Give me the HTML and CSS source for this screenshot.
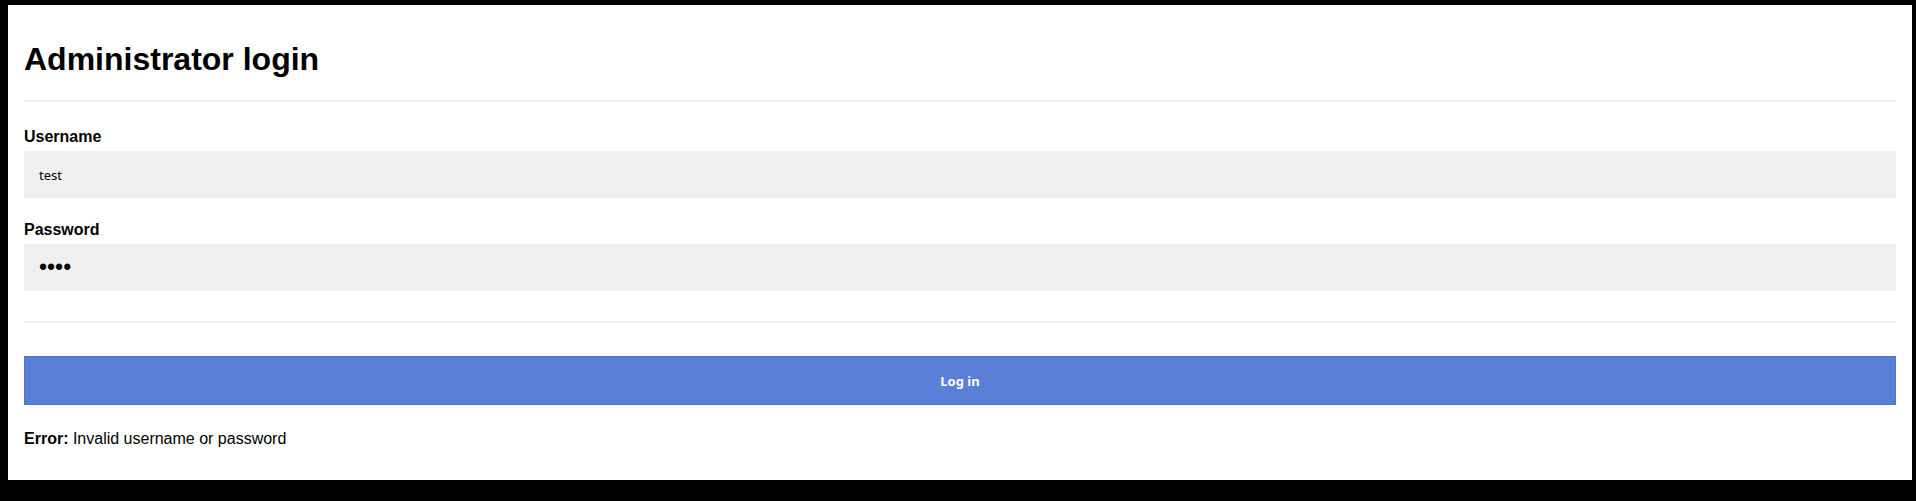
FILE: index.html
```html
<!DOCTYPE html>
<html lang="en">
<head>
<meta charset="utf-8">
<title>Administrator login</title>
<link rel="stylesheet" href="styles.css">
</head>
<body>
<main class="page">
  <h1 class="title">Administrator login</h1>
  <hr class="rule">
  <form class="login-form">
    <label class="field-label" for="username">Username</label>
    <input class="field-input" id="username" type="text" value="test">
    <label class="field-label field-label--second" for="password">Password</label>
    <input class="field-input field-input--password" id="password" type="password" value="test">
    <hr class="rule rule--form">
    <button class="submit" type="button">Log in</button>
  </form>
  <p class="error"><strong>Error:</strong> Invalid username or password</p>
</main>
</body>
</html>
```

FILE: styles.css
```css
html {
  background: #000;
}
body {
  margin: 5px 4px 0 8px;
  padding: 0;
  background: #fff;
  font-family: "Liberation Sans", Arial, sans-serif;
  color: #000;
}
.page {
  padding: 36px 16px 32px 16px;
}
.title {
  margin: 0 0 22px 0;
  font-size: 32px;
  font-weight: bold;
  line-height: normal;
}
.rule {
  height: 2px;
  margin: 0;
  border: none;
  background: #efefef;
}
.login-form {
  display: flex;
  flex-direction: column;
}
.field-label {
  display: block;
  margin-top: 26px;
  margin-bottom: 5px;
  font-size: 16px;
  font-weight: bold;
  line-height: normal;
}
.field-label--second {
  margin-top: 23px;
}
.field-input {
  box-sizing: border-box;
  width: 100%;
  height: 47px;
  margin: 0;
  padding: 0 15px;
  border: none;
  outline: none;
  background: #f0f0f0;
  font-family: "Noto Sans", sans-serif;
  font-size: 13px;
  color: #000;
}
.field-input--password {
  font-family: "Liberation Sans", Arial, sans-serif;
  font-size: 23px;
}
.rule--form {
  margin-top: 30px;
}
.submit {
  box-sizing: border-box;
  width: 100%;
  height: 49px;
  margin-top: 33px;
  border: 1px solid #4d72cf;
  background: #5a7fd6;
  color: #fff;
  font-family: "Noto Sans", sans-serif;
  font-size: 13px;
  font-weight: bold;
  cursor: pointer;
}
.error {
  margin: 25px 0 0 0;
  font-size: 16px;
  line-height: normal;
}
```
